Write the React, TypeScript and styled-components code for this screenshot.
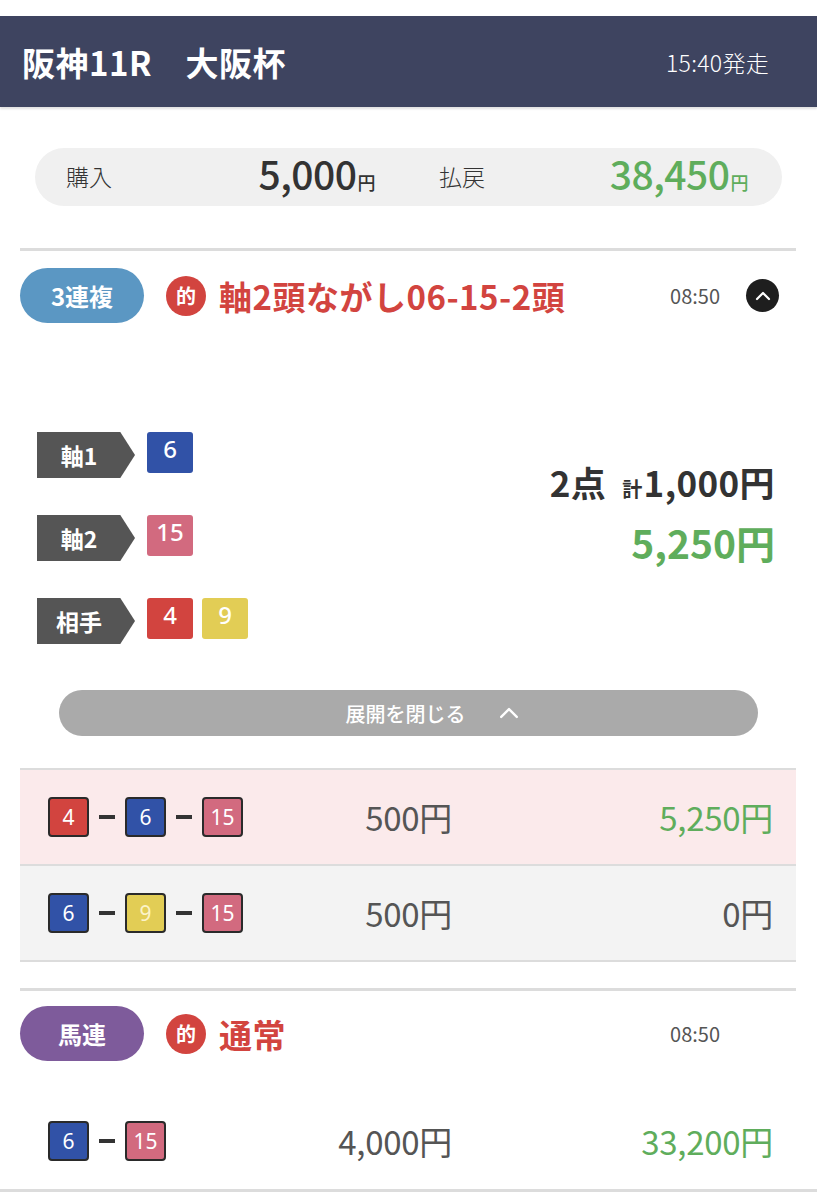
import React from "react";
import styled, { createGlobalStyle } from "styled-components";

const GlobalStyle = createGlobalStyle`
  body {
    margin: 0;
    background: #fff;
    font-family: "Noto Sans CJK JP", "Noto Sans", sans-serif;
    color: #333;
  }
`;

const colors = {
  green: "#5fad5c",
  red: "#d2443f",
  blue: "#3152a7",
  pink: "#d26a7f",
  yellow: "#e2cd55",
};

type HorseColor = "blue" | "pink" | "red" | "yellow";

const Page = styled.div`
  padding-top: 16px;
`;

const Header = styled.header`
  height: 91px;
  background-color: #3e4460;
  display: flex;
  align-items: center;
  justify-content: space-between;
  padding: 0 48px 0 22px;
  color: #fff;
  box-shadow: 0 2px 2px rgba(0, 0, 0, 0.12);
`;

const RaceTitle = styled.h1`
  margin: 0;
  font-size: 33px;
  font-weight: 700;
  letter-spacing: 0.5px;
`;

const StartTime = styled.span`
  font-size: 23px;
  font-weight: 300;
  letter-spacing: 0.3px;
`;

const Main = styled.main`
  padding: 0 21px 0 20px;
`;

const Summary = styled.div`
  margin: 41px 14px 0 15px;
  height: 58px;
  border-radius: 29px;
  background-color: #f0f0f0;
  display: grid;
  grid-template-columns: 1fr 1fr;
  column-gap: 64px;
  padding: 0 34px 0 31px;
  align-items: center;
`;

const SummaryItem = styled.div`
  display: flex;
  justify-content: space-between;
  align-items: center;
`;

const SummaryLabel = styled.span`
  font-size: 23px;
  font-weight: 300;
  margin-bottom: 4px;
`;

const SummaryValue = styled.span<{ $green?: boolean }>`
  font-size: 39px;
  font-weight: 500;
  letter-spacing: -0.5px;
  line-height: 50px;
  color: ${(p) => (p.$green ? colors.green : "#333")};
`;

const Yen = styled.small`
  font-size: 18px;
  font-weight: 500;
  margin-left: 1px;
`;

const Section = styled.section`
  border-top: 3px solid #dcdcdc;
`;

const FirstSection = styled(Section)`
  margin-top: 42px;
`;

const NextSection = styled(Section)`
  margin-top: 26px;
`;

const BetHeader = styled.div<{ $top: number }>`
  display: flex;
  align-items: center;
  height: 55px;
  margin-top: ${(p) => p.$top}px;
`;

const TypePill = styled.span<{ $bg: string }>`
  width: 124px;
  height: 55px;
  border-radius: 28px;
  background-color: ${(p) => p.$bg};
  color: #fff;
  font-size: 24px;
  font-weight: 700;
  display: flex;
  align-items: center;
  justify-content: center;
  flex-shrink: 0;
`;

const HitMark = styled.span`
  width: 40px;
  height: 40px;
  border-radius: 50%;
  background-color: ${colors.red};
  color: #fff;
  font-size: 20px;
  font-weight: 700;
  display: flex;
  align-items: center;
  justify-content: center;
  margin-left: 22px;
  flex-shrink: 0;
`;

const BetTitle = styled.span`
  margin-left: 13px;
  color: ${colors.red};
  font-size: 33px;
  font-weight: 700;
  letter-spacing: 0.5px;
  flex: 1;
  white-space: nowrap;
`;

const BetTime = styled.span`
  font-size: 20px;
  color: #555;
  margin-right: 26px;
`;

const ToggleCircle = styled.span<{ $hidden?: boolean }>`
  width: 33px;
  height: 33px;
  border-radius: 50%;
  background-color: #1e1e1e;
  display: flex;
  align-items: center;
  justify-content: center;
  margin-right: 17px;
  visibility: ${(p) => (p.$hidden ? "hidden" : "visible")};
`;

const Details = styled.div`
  margin-top: 109px;
  padding: 0 21px 0 17px;
  display: flex;
  align-items: center;
  justify-content: space-between;
`;

const Selections = styled.div`
  display: flex;
  flex-direction: column;
  gap: 37px;
`;

const SelectionRow = styled.div`
  display: flex;
  align-items: flex-start;
  gap: 9px;
`;

const RoleTag = styled.span`
  width: 98px;
  height: 46px;
  padding-right: 14px;
  box-sizing: border-box;
  background-color: #555;
  color: #fff;
  font-size: 23px;
  font-weight: 700;
  display: flex;
  align-items: center;
  justify-content: center;
  clip-path: polygon(0 0, 85% 0, 100% 50%, 85% 100%, 0 100%);
  margin-right: 3px;
`;

const HorseBox = styled.span<{ $color: HorseColor }>`
  width: 46px;
  height: 41px;
  border-radius: 3px;
  background-color: ${(p) => colors[p.$color]};
  color: #fff;
  font-family: "Noto Sans", sans-serif;
  font-size: 24px;
  font-weight: 500;
  display: flex;
  justify-content: center;
  padding-top: 2px;
  box-sizing: border-box;
  line-height: 30px;
`;

const Totals = styled.div`
  display: flex;
  flex-direction: column;
  align-items: flex-end;
  margin-bottom: 50px;
`;

const Points = styled.div`
  font-size: 35px;
  font-weight: 700;
  color: #333;
  line-height: 42px;
  letter-spacing: 0.4px;
`;

const Small = styled.span`
  font-size: 20px;
  margin: 0 1px 0 16px;
`;

const TotalPayout = styled.div`
  font-size: 39px;
  font-weight: 700;
  color: ${colors.green};
  line-height: 48px;
  margin-top: 8px;
`;

const CollapseButton = styled.button`
  display: flex;
  align-items: center;
  justify-content: center;
  gap: 30px;
  width: calc(100% - 77px);
  margin: 46px 38px 0 39px;
  height: 46px;
  border: none;
  border-radius: 23px;
  background-color: #aaa;
  color: #fff;
  font-family: inherit;
  font-size: 20px;
  font-weight: 500;
  padding: 0 0 0 50px;
`;

const ResultTable = styled.div<{ $bordered?: boolean }>`
  margin-top: 32px;
  border-top: ${(p) => (p.$bordered ? "2px solid #dcdcdc" : "none")};
`;

const ResultRow = styled.div<{ $bg: string; $last?: boolean }>`
  height: 96px;
  box-sizing: border-box;
  background-color: ${(p) => p.$bg};
  border-bottom: ${(p) => (p.$last ? "none" : "2px solid #dcdcdc")};
  display: grid;
  grid-template-columns: 250px 154px 1fr;
  align-items: center;
  padding: 0 23px 0 28px;
`;

const Combo = styled.div`
  display: flex;
  align-items: center;
  gap: 10px;
`;

const ComboBox = styled.span<{ $color: HorseColor }>`
  width: 41px;
  height: 40px;
  box-sizing: border-box;
  border: 2px solid #2a2a2a;
  border-radius: 4px;
  background-color: ${(p) => colors[p.$color]};
  color: ${(p) => (p.$color === "yellow" ? "#fbf3c8" : "#fff")};
  font-family: "Noto Sans", sans-serif;
  font-size: 21px;
  display: flex;
  align-items: center;
  justify-content: center;
`;

const Dash = styled.span`
  width: 16px;
  height: 4px;
  background-color: #333;
`;

const Amount = styled.span<{ $green?: boolean }>`
  text-align: right;
  font-size: 33px;
  letter-spacing: -0.3px;
  color: ${(p) => (p.$green ? colors.green : "#555")};
`;

const PageEnd = styled.div`
  border-top: 3px solid #dcdcdc;
  height: 12px;
`;

const Chevron = ({ size, width }: { size: number; width: number }) => (
  <svg width={size} height={size} viewBox="0 0 20 20" fill="none">
    <polyline
      points="4,13 10,7 16,13"
      stroke="#fff"
      strokeWidth={width}
      strokeLinecap="round"
      strokeLinejoin="round"
    />
  </svg>
);

const YenAmount = ({ value, green }: { value: string; green?: boolean }) => (
  <Amount $green={green}>{value}円</Amount>
);

const Combination = ({ horses }: { horses: [string, HorseColor][] }) => (
  <Combo>
    {horses.map(([n, c], i) => (
      <React.Fragment key={n}>
        {i > 0 && <Dash />}
        <ComboBox $color={c}>{n}</ComboBox>
      </React.Fragment>
    ))}
  </Combo>
);

export default function App() {
  return (
    <Page>
      <GlobalStyle />
      <Header>
        <RaceTitle>阪神11R　大阪杯</RaceTitle>
        <StartTime>15:40発走</StartTime>
      </Header>
      <Main>
        <Summary>
          <SummaryItem>
            <SummaryLabel>購入</SummaryLabel>
            <SummaryValue>
              5,000<Yen>円</Yen>
            </SummaryValue>
          </SummaryItem>
          <SummaryItem>
            <SummaryLabel>払戻</SummaryLabel>
            <SummaryValue $green>
              38,450<Yen>円</Yen>
            </SummaryValue>
          </SummaryItem>
        </Summary>

        <FirstSection>
          <BetHeader $top={17}>
            <TypePill $bg="#5b97c3">3連複</TypePill>
            <HitMark>的</HitMark>
            <BetTitle>軸2頭ながし06-15-2頭</BetTitle>
            <BetTime>08:50</BetTime>
            <ToggleCircle>
              <Chevron size={20} width={2.2} />
            </ToggleCircle>
          </BetHeader>

          <Details>
            <Selections>
              <SelectionRow>
                <RoleTag>軸1</RoleTag>
                <HorseBox $color="blue">6</HorseBox>
              </SelectionRow>
              <SelectionRow>
                <RoleTag>軸2</RoleTag>
                <HorseBox $color="pink">15</HorseBox>
              </SelectionRow>
              <SelectionRow>
                <RoleTag>相手</RoleTag>
                <HorseBox $color="red">4</HorseBox>
                <HorseBox $color="yellow">9</HorseBox>
              </SelectionRow>
            </Selections>
            <Totals>
              <Points>
                2点<Small>計</Small>1,000円
              </Points>
              <TotalPayout>5,250円</TotalPayout>
            </Totals>
          </Details>

          <CollapseButton>
            展開を閉じる
            <Chevron size={26} width={1.8} />
          </CollapseButton>

          <ResultTable $bordered>
            <ResultRow $bg="#fbeaeb">
              <Combination
                horses={[
                  ["4", "red"],
                  ["6", "blue"],
                  ["15", "pink"],
                ]}
              />
              <YenAmount value="500" />
              <YenAmount value="5,250" green />
            </ResultRow>
            <ResultRow $bg="#f3f3f3">
              <Combination
                horses={[
                  ["6", "blue"],
                  ["9", "yellow"],
                  ["15", "pink"],
                ]}
              />
              <YenAmount value="500" />
              <YenAmount value="0" />
            </ResultRow>
          </ResultTable>
        </FirstSection>

        <NextSection>
          <BetHeader $top={15}>
            <TypePill $bg="#7e5b9b">馬連</TypePill>
            <HitMark>的</HitMark>
            <BetTitle>通常</BetTitle>
            <BetTime>08:50</BetTime>
            <ToggleCircle $hidden />
          </BetHeader>
          <ResultTable>
            <ResultRow $bg="#fff" $last>
              <Combination
                horses={[
                  ["6", "blue"],
                  ["15", "pink"],
                ]}
              />
              <YenAmount value="4,000" />
              <YenAmount value="33,200" green />
            </ResultRow>
          </ResultTable>
        </NextSection>
      </Main>
      <PageEnd />
    </Page>
  );
}
